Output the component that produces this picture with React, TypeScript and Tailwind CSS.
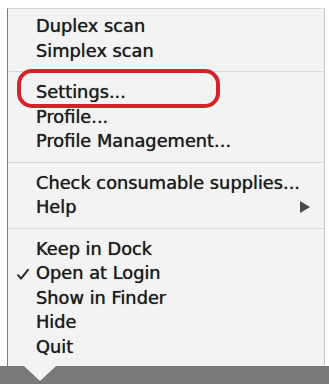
import React from 'react';

type Item = { label: string; checked?: boolean; submenu?: boolean } | 'sep';

const items: Item[] = [
  { label: 'Duplex scan' },
  { label: 'Simplex scan' },
  'sep',
  { label: 'Settings...' },
  { label: 'Profile...' },
  { label: 'Profile Management...' },
  'sep',
  { label: 'Check consumable supplies...' },
  { label: 'Help', submenu: true },
  'sep',
  { label: 'Keep in Dock' },
  { label: 'Open at Login', checked: true },
  { label: 'Show in Finder' },
  { label: 'Hide' },
  { label: 'Quit' },
];

function CheckMark() {
  return (
    <svg width="12" height="11" viewBox="0 0 12 11" className="absolute left-[9px] top-[8px]">
      <path d="M1 6.2 L4 9.6 L11 0.8" fill="none" stroke="#2a2a2a" strokeWidth="2" strokeLinecap="round" strokeLinejoin="round" />
    </svg>
  );
}

function MenuRow({ item }: { item: Exclude<Item, 'sep'> }) {
  return (
    <div className="relative h-[24.5px] pl-[28px] pr-[14px] leading-[24.5px] flex items-center">
      {item.checked && <CheckMark />}
      <span className="flex-1 whitespace-nowrap">{item.label}</span>
      {item.submenu && (
        <svg width="10" height="12" viewBox="0 0 10 12">
          <path d="M0 0 L10 6 L0 12 Z" fill="#4a4a4a" />
        </svg>
      )}
    </div>
  );
}

export default function App() {
  return (
    <div className="w-[329px] h-[384px] bg-white flex flex-col overflow-hidden">
      <div className="relative flex-1 mt-[8px] ml-[7px] w-[318px] bg-[#f3f3f3] border-t border-t-[#d6d6d6] border-l border-l-[#7d7d7d] border-r border-r-[#c4c4c4] rounded-br-[3px] pt-[5px] text-[17.8px] text-[#1c1c1c] [font-family:'DejaVu_Sans',sans-serif] [text-shadow:0_0_0.8px_#333]">
        {items.map((item, i) =>
          item === 'sep' ? (
            <div key={i} className="h-[17px] flex items-center">
              <div className="h-px w-full bg-[#d8d8d8]" />
            </div>
          ) : (
            <MenuRow key={i} item={item} />
          )
        )}
        {/* red annotation around Settings */}
        <div className="absolute left-[9px] top-[60px] w-[203px] h-[39px] rounded-[15px] border-[4px] border-[#d3222a]" />
      </div>
      <div className="relative h-[18px] bg-[#797979]">
        <svg width="32" height="16" viewBox="0 0 32 16" className="absolute left-[24px] top-0">
          <path d="M0 0 L32 0 L16 15 Z" fill="#f3f3f3" />
        </svg>
      </div>
    </div>
  );
}
